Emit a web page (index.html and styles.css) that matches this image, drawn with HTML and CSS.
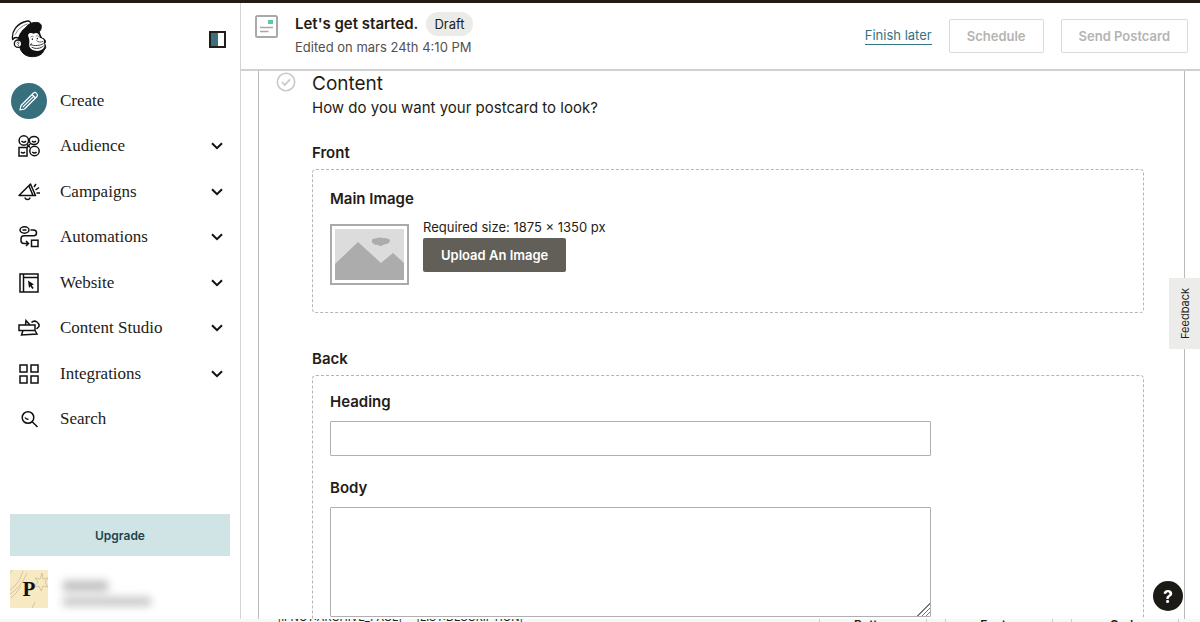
FILE: index.html
```html
<!DOCTYPE html>
<html lang="en">
<head>
    <meta charset="UTF-8">
    <meta name="viewport" content="width=device-width, initial-scale=1.0">
    <title>Postcard Builder</title>
    <link rel="stylesheet" href="styles.css">
</head>
<body>
    <div class="app">
        <aside class="sidebar">
            <div class="brand">
                <a href="#" class="logo" aria-label="Home">
                    <svg width="37" height="38" viewBox="34 60 111 114" fill="none" stroke="#111" stroke-width="3" stroke-linejoin="round" stroke-linecap="round">
                        <path d="M61 103C66 88 78 80 94 82C110 82 119 90 121 103L126 114C137 116 140 124 135 131C140 139 139 146 133 150C129 164 114 170 98 170C79 170 66 160 61 144C56 132 56 116 61 103Z" fill="#111"/>
                        <path d="M39 119C35 96 50 69 84 63C92 62 95 70 91 76C74 84 62 96 57 115C50 111 43 113 39 119Z" fill="#fff" stroke-width="4"/>
                        <path d="M47 103C54 88 66 77 83 72" stroke-width="1.500"/>
                        <path d="M79 83C84 71 101 65 116 68C128 72 127 84 120 94C111 86 98 84 85 88Z" fill="#111"/>
                        <path d="M87 112C82 102 90 95 102 101C111 96 120 102 120 113C130 115 136 120 132 127C137 138 134 146 125 150C111 156 96 152 90 142C86 134 92 126 87 112Z" fill="#fff" stroke="none"/>
                        <circle cx="55" cy="131" r="11" fill="#fff" stroke-width="4"/>
                        <path d="M51 129C54 124 60 126 58 130L54 133L57 137" stroke-width="2"/>
                        <path d="M93 111C96 108 99 108 101 110M109 109C111 106 115 107 117 109" stroke-width="1.500"/>
                        <path d="M98 117V118M113 115V116" stroke-width="4"/>
                        <path d="M111 122C115 127 124 128 130 124" stroke-width="2"/>
                        <path d="M94 134C104 139 121 137 131 131M97 142C108 148 123 146 131 138M95 131L92 136" stroke-width="2.500"/>
                    </svg>
                </a>
                <button class="collapse" type="button" aria-label="Collapse menu"></button>
            </div>

            <nav class="menu">
                <a href="#" class="menu-item">
                    <span class="menu-icon create">
                        <svg width="22" height="22" viewBox="0 0 22 22" fill="none" stroke="#fff" stroke-width="1.200" stroke-linejoin="round">
                            <path d="M2 20L3 15.500L15.500 3Q17 1.800 18.500 3.400Q20.200 5 19 6.500L6.500 19Z"/>
                            <path d="M14 4.500L17.500 8M4.800 17.200L15.700 6.300"/>
                        </svg>
                    </span>
                    <span class="menu-label">Create</span>
                </a>
                <a href="#" class="menu-item">
                    <span class="menu-icon">
                        <svg width="22" height="22" viewBox="0 0 22 22" fill="none" stroke="#111" stroke-width="1.500">
                            <circle cx="5.800" cy="5.500" r="4.700"/>
                            <ellipse cx="16" cy="5.500" rx="4.700" ry="4"/>
                            <rect x="1" y="12.500" width="8" height="8.500"/>
                            <circle cx="16.500" cy="16" r="4.700"/>
                            <path d="M3.500 6Q5.800 8.500 8 6M14 6Q16 8 18 6M3 17Q5 19 7 17M14.300 17Q16.500 19 18.600 17M9 9.500L12 12.500M12 9L9 12.500"/>
                        </svg>
                    </span>
                    <span class="menu-label">Audience</span>
                    <svg class="chevron" width="12" height="8" viewBox="0 0 12 8"><path d="M1 1.200L6 6.200L11 1.200"/></svg>
                </a>
                <a href="#" class="menu-item">
                    <span class="menu-icon">
                        <svg width="22" height="22" viewBox="0 0 22 22" fill="none" stroke="#111" stroke-width="1.500" stroke-linejoin="round">
                            <path d="M1 14.500L12.500 3L17.500 14.500ZM11 5L15 14.500M7 16.500Q7.300 18.500 9.500 18.500Q11.700 18.500 12 16.500M16 6L18 3M17.500 9L21 6.500M18.500 12H22"/>
                        </svg>
                    </span>
                    <span class="menu-label">Campaigns</span>
                    <svg class="chevron" width="12" height="8" viewBox="0 0 12 8"><path d="M1 1.200L6 6.200L11 1.200"/></svg>
                </a>
                <a href="#" class="menu-item">
                    <span class="menu-icon">
                        <svg width="22" height="22" viewBox="0 0 22 22" fill="none" stroke="#111" stroke-width="1.500">
                            <ellipse cx="6.500" cy="4" rx="4.500" ry="3.200"/>
                            <path d="M4.500 4H8.500M12.500 4H15.500Q18.500 4 18.500 7Q18.500 9.800 15.500 9.800H6Q3 9.800 3 13V14.500Q3 17.500 6 17.500H10M8 15L10.500 17.500L8 20"/>
                            <rect x="13.500" y="14.200" width="6.500" height="6.300"/>
                        </svg>
                    </span>
                    <span class="menu-label">Automations</span>
                    <svg class="chevron" width="12" height="8" viewBox="0 0 12 8"><path d="M1 1.200L6 6.200L11 1.200"/></svg>
                </a>
                <a href="#" class="menu-item">
                    <span class="menu-icon">
                        <svg width="22" height="22" viewBox="0 0 22 22" fill="none" stroke="#111" stroke-width="1.500">
                            <path d="M2 2H20V20H2ZM5.500 2V20M5.500 5.500H20"/>
                            <path d="M10 8.500L16 12.500L13.700 13.300L15.700 16L14.300 17L12.400 14.300L11 16Z" fill="#111" stroke="none"/>
                        </svg>
                    </span>
                    <span class="menu-label">Website</span>
                    <svg class="chevron" width="12" height="8" viewBox="0 0 12 8"><path d="M1 1.200L6 6.200L11 1.200"/></svg>
                </a>
                <a href="#" class="menu-item">
                    <span class="menu-icon">
                        <svg width="22" height="22" viewBox="0 0 22 22" fill="none" stroke="#111" stroke-width="1.500">
                            <path d="M1 8H17V13.500H1ZM7.500 8L8 3.500L11.500 7.500M13.500 5.500Q16 3 19 5Q21.500 7 21 9.500L18.500 12M5 13.500L3.500 18L19 17L17 13.500"/>
                        </svg>
                    </span>
                    <span class="menu-label">Content Studio</span>
                    <svg class="chevron" width="12" height="8" viewBox="0 0 12 8"><path d="M1 1.200L6 6.200L11 1.200"/></svg>
                </a>
                <a href="#" class="menu-item">
                    <span class="menu-icon">
                        <svg width="22" height="22" viewBox="0 0 22 22" fill="none" stroke="#111" stroke-width="1.500">
                            <path d="M2 2H9V9H2ZM13 2H20V9H13ZM2 13H9V20H2ZM13 13H20V20H13Z"/>
                        </svg>
                    </span>
                    <span class="menu-label">Integrations</span>
                    <svg class="chevron" width="12" height="8" viewBox="0 0 12 8"><path d="M1 1.200L6 6.200L11 1.200"/></svg>
                </a>
                <a href="#" class="menu-item">
                    <span class="menu-icon">
                        <svg width="22" height="22" viewBox="0 0 22 22" fill="none" stroke="#111" stroke-width="1.500">
                            <circle cx="10" cy="9.500" r="5.800"/>
                            <path d="M14.200 13.700L19.500 19M7 9.500Q8 11.500 10.500 11.200"/>
                        </svg>
                    </span>
                    <span class="menu-label">Search</span>
                </a>
            </nav>

            <div class="sidebar-bottom">
                <button class="upgrade" type="button">Upgrade</button>
                <div class="account">
                    <div class="avatar">
                        <svg class="avatar-pattern" width="38" height="38" viewBox="0 0 38 38" fill="none" stroke="#cdbf91" stroke-width="0.8">
                            <path d="M0 20Q9 14 13 1M0 24Q11 17 17 3M1 28Q8 22 11 16M22 38L25 32M0 3L3 0M32 3L33 9L38 8L35 12L38 17L33 16L31 21L29 16L24 17L28 12L25 8L30 9Z"/>
                        </svg>
                        <span class="avatar-letter">P</span>
                    </div>
                    <div class="account-info">
                        <span class="account-name"></span>
                        <span class="account-org"></span>
                    </div>
                </div>
            </div>
        </aside>

        <main class="main">
            <header class="header">
                <svg class="postcard-icon" width="24" height="24" viewBox="0 0 24 24" fill="none" stroke="#a9a9a7" stroke-width="2">
                    <rect x="1" y="1" width="21" height="21" rx="1.500"/>
                    <path d="M5 12.500H18M5 16.500H13.500" stroke-width="1.600"/>
                    <rect x="13" y="5" width="5" height="4" fill="#5bcba5" stroke="none"/>
                </svg>
                <div class="header-text">
                    <div class="title-row">
                        <h1>Let's get started.</h1>
                        <span class="badge">Draft</span>
                    </div>
                    <p class="edited">Edited on mars 24th 4:10 PM</p>
                </div>
                <div class="actions">
                    <a href="#" class="finish">Finish later</a>
                    <button class="btn" type="button" disabled>Schedule</button>
                    <button class="btn" type="button" disabled>Send Postcard</button>
                </div>
            </header>

            <div class="panel">
                <svg class="check" width="20" height="20" viewBox="0 0 20 20" fill="none" stroke="#c9c9c8" stroke-width="1.600">
                    <circle cx="10" cy="10" r="8.700"/>
                    <path d="M6 10.200L8.800 13L14 7.300" stroke-width="1.800"/>
                </svg>
                <form class="content">
                    <h2>Content</h2>
                    <p class="intro">How do you want your postcard to look?</p>

                    <h3>Front</h3>
                    <section class="box front">
                        <h4>Main Image</h4>
                        <div class="upload">
                            <div class="thumb">
                                <svg width="69" height="51" viewBox="0 0 69 51">
                                    <rect width="69" height="51" fill="#dcdcdc"/>
                                    <path d="M0 35L23 13L46 34L58 24L69 34V51H0Z" fill="#acacac"/>
                                    <path d="M37 13Q36 9 41 9.500Q44 8 48 9Q55 9 55 12Q54 15 49 15.500Q46 18 43 16Q38 16 37 13Z" fill="#acacac"/>
                                </svg>
                            </div>
                            <div>
                                <p class="size">Required size: 1875 × 1350 px</p>
                                <button class="upload-btn" type="button">Upload An Image</button>
                            </div>
                        </div>
                    </section>

                    <h3>Back</h3>
                    <section class="box back">
                        <label for="heading">Heading</label>
                        <input type="text" id="heading" name="heading">
                        <label for="body">Body</label>
                        <textarea id="body" name="body"></textarea>
                    </section>
                </form>
            </div>
        </main>
    </div>

    <!-- top edge of the next preview strip -->
    <footer class="strip">
        <span class="merge-tag">*|IFNOT:ARCHIVE_PAGE|* *|LIST:DESCRIPTION|*</span>
        <div class="blocks">
            <span class="block">Button</span>
            <span class="block">Footer</span>
            <span class="block">Code</span>
        </div>
    </footer>

    <button class="feedback" type="button">Feedback</button>
    <button class="help" type="button" aria-label="Help">?</button>
</body>
</html>
```
FILE: styles.css
```css
* {
    box-sizing: border-box;
}
body {
    margin: 0;
    height: 100vh;
    display: flex;
    flex-direction: column;
    overflow: hidden;
    border-top: 3px solid #231a14;
    background: #fff;
    color: #241c15;
    font-family: Inter, "Liberation Sans", sans-serif;
    font-size: 14px;
}
h1, h2, h3, h4, p {
    margin: 0;
}
button {
    font-family: inherit;
    cursor: pointer;
}
.app {
    flex: 1;
    min-height: 0;
    display: flex;
}

/* sidebar */
.sidebar {
    width: 241px;
    flex-shrink: 0;
    display: flex;
    flex-direction: column;
    border-right: 1px solid #d4d4d4;
}
.brand {
    display: flex;
    align-items: center;
    justify-content: space-between;
    height: 75px;
    padding: 0 14px 3px 11px;
}
.logo svg {
    display: block;
}
.collapse {
    width: 17px;
    height: 17px;
    padding: 0;
    border: 2px solid #231e1a;
    background: linear-gradient(90deg, #3c707d 50%, #fff 50%);
}
.menu {
    display: grid;
    grid-template-rows: repeat(8, 1fr);
    height: 364px;
}
.menu-item {
    display: flex;
    align-items: center;
    padding: 0 17px 0 11px;
    color: #241c15;
    text-decoration: none;
}
.menu-icon {
    display: flex;
    align-items: center;
    justify-content: center;
    width: 36px;
    height: 36px;
    margin-right: 13px;
}
.create {
    border-radius: 50%;
    background: #386f7c;
}
.menu-label {
    flex: 1;
    font-family: "Liberation Serif", serif;
    font-size: 17px;
}
.chevron {
    fill: none;
    stroke: #111;
    stroke-width: 2;
}
.sidebar-bottom {
    margin-top: auto;
    padding: 0 10px 11px;
}
.upgrade {
    width: 100%;
    height: 42px;
    margin-bottom: 14px;
    border: 0;
    background: #d0e4e6;
    color: #1b444d;
    font-size: 12px;
    font-weight: 600;
}
.account {
    display: flex;
    gap: 15px;
}
.avatar {
    display: grid;
    place-items: center;
    width: 38px;
    height: 38px;
    background: #f7e9c1;
}
.avatar-pattern, .avatar-letter {
    grid-area: 1 / 1;
}
.avatar-letter {
    font-family: "Liberation Serif", serif;
    font-size: 21px;
    font-weight: bold;
    color: #111;
}
.account-info {
    display: flex;
    flex-direction: column;
    gap: 6px;
    padding-top: 11px;
    filter: blur(4px);
}
.account-name {
    width: 45px;
    height: 10px;
    background: #bbb;
}
.account-org {
    width: 88px;
    height: 9px;
    background: #c6c6c6;
}

/* header */
.main {
    flex: 1;
    min-width: 0;
    display: flex;
    flex-direction: column;
}
.header {
    display: flex;
    align-items: flex-start;
    flex-shrink: 0;
    height: 68px;
    padding: 8px 12px 0 14px;
    border-bottom: 2px solid #d0d0d0;
}
.postcard-icon {
    margin: 4px 16px 0 0;
}
.title-row {
    display: flex;
    align-items: center;
    gap: 8px;
    height: 25px;
}
h1 {
    font-size: 15px;
    font-weight: 600;
}
.badge {
    padding: 0 8px;
    border-radius: 12px;
    background: #ebebe8;
    font-size: 13px;
    line-height: 24px;
}
.edited {
    color: #55504b;
    font-size: 13px;
    line-height: 22px;
}
.actions {
    display: flex;
    align-items: center;
    gap: 17px;
    margin-left: auto;
    padding-top: 8px;
}
.finish {
    border-bottom: 1px solid #337482;
    color: #337482;
    font-size: 13px;
    line-height: 17px;
    text-decoration: none;
}
.btn {
    height: 34px;
    padding: 0 17px;
    border: 1px solid #dadada;
    border-radius: 2px;
    background: #fff;
    color: #b4b4b2;
    font-size: 13px;
    font-weight: 600;
    cursor: default;
}

/* form */
.panel {
    flex: 1;
    min-height: 0;
    display: flex;
    align-items: flex-start;
    overflow: hidden;
    margin: 0 15px 0 17px;
    padding: 1px 40px 0 17px;
    border: 1px solid #bbb;
    border-width: 0 1px;
}
.check {
    flex-shrink: 0;
    margin-right: 16px;
}
.content {
    flex: 1;
    min-width: 0;
}
h2 {
    font-size: 19px;
    font-weight: 400;
    line-height: 24px;
}
.intro {
    margin-bottom: 21px;
    font-size: 15px;
    line-height: 24px;
}
h3, h4, .back label {
    display: block;
    font-size: 15px;
    font-weight: 600;
    line-height: 24px;
}
h3 {
    margin-bottom: 4px;
}
.box {
    border: 1px dashed #b5b5b5;
    border-radius: 4px;
    padding: 17px;
}
.front {
    height: 144px;
    margin-bottom: 34px;
}
.upload {
    display: flex;
    gap: 14px;
    margin-top: 6px;
}
.thumb {
    height: 61px;
    margin-top: 7px;
    padding: 3px;
    border: 2px solid #aaa;
}
.thumb svg {
    display: block;
}
.size {
    font-size: 13px;
    line-height: 21px;
}
.upload-btn {
    height: 34px;
    padding: 0 18px;
    border: 0;
    border-radius: 2px;
    background: #625e58;
    color: #fff;
    font-size: 13px;
    font-weight: 600;
}
.back {
    padding-top: 14px;
}
.back input, .back textarea {
    display: block;
    width: 100%;
    max-width: 601px;
    margin: 7px 0 20px;
    padding: 6px;
    border: 1px solid #b0b0b0;
    border-radius: 1px;
    background: #fff;
    font: inherit;
}
.back input {
    height: 35px;
}
.back textarea {
    height: 110px;
}
.back textarea::-webkit-resizer {
    background: linear-gradient(135deg, #fff 52%, transparent 52%), repeating-linear-gradient(135deg, #777 0 1px, #fff 1px 3px);
}

/* bottom strip */
.strip {
    display: flex;
    flex-shrink: 0;
    justify-content: space-between;
    height: 3px;
    overflow: hidden;
    background: #f7f7f7;
}
.merge-tag {
    align-self: flex-end;
    margin-left: 272px;
    font-size: 11px;
    line-height: 10px;
}
.blocks {
    display: flex;
    gap: 18px;
    margin-right: 21px;
}
.block {
    width: 108px;
    height: 30px;
    border: 1px solid #ccc;
    border-width: 0 1px;
    font-size: 12px;
    font-weight: 600;
    line-height: 12px;
    text-align: center;
}

/* floating buttons */
.feedback {
    position: fixed;
    top: 278px;
    right: 0;
    width: 31px;
    height: 71px;
    padding: 0;
    border: 0;
    background: #ececea;
    color: #241c15;
    font-size: 11px;
    writing-mode: sideways-lr;
}
.help {
    position: fixed;
    right: 17px;
    bottom: 11px;
    width: 30px;
    height: 30px;
    padding: 0;
    border: 0;
    border-radius: 50%;
    background: #1c1a15;
    color: #fff;
    font-size: 18px;
    font-weight: 700;
}
```
